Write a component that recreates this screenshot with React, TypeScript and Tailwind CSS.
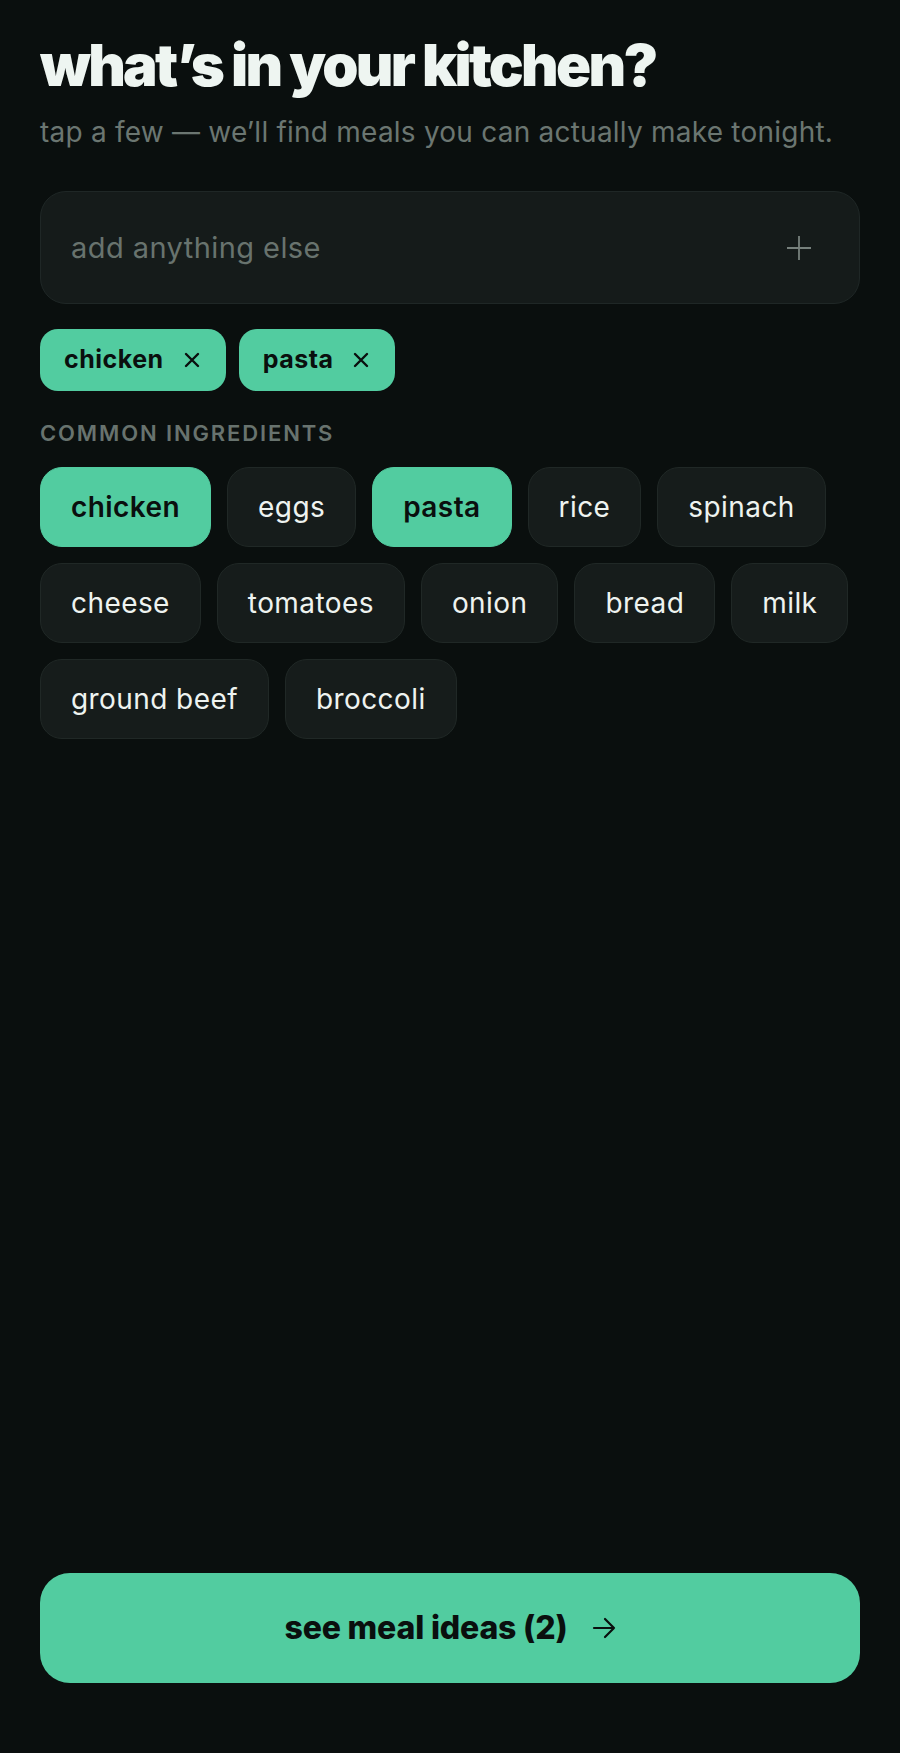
import { useState } from "react";

const COMMON = [
  "chicken",
  "eggs",
  "pasta",
  "rice",
  "spinach",
  "cheese",
  "tomatoes",
  "onion",
  "bread",
  "milk",
  "ground beef",
  "broccoli",
];

function CloseIcon() {
  return (
    <svg width="16" height="16" viewBox="0 0 16 16" fill="none" stroke="currentColor" strokeWidth="2.4" strokeLinecap="round">
      <path d="M2 2l12 12M14 2L2 14" />
    </svg>
  );
}

function PlusIcon() {
  return (
    <svg width="24" height="24" viewBox="0 0 24 24" fill="none" stroke="currentColor" strokeWidth="1.8">
      <path d="M12 0v24M0 12h24" />
    </svg>
  );
}

function ArrowIcon() {
  return (
    <svg width="24" height="22" viewBox="0 0 24 22" fill="none" stroke="currentColor" strokeWidth="2.2" strokeLinecap="round" strokeLinejoin="round">
      <path d="M2 11h20M13 2l9 9-9 9" />
    </svg>
  );
}

export default function App() {
  const [selected, setSelected] = useState<string[]>(["chicken", "pasta"]);
  const [extra, setExtra] = useState("");

  const toggle = (item: string) => {
    setSelected((s) => (s.includes(item) ? s.filter((x) => x !== item) : [...s, item]));
  };

  return (
    <div
      className="min-h-[1753px] bg-[#0a0f0e] flex flex-col px-10 pt-[36px] pb-[70px]"
      style={{ fontFamily: "Inter, 'Noto Sans', sans-serif" }}
    >
      <h1 className="text-[58px] leading-none font-black tracking-[-0.047em] text-[#eef5f1]">
        what’s in your kitchen?
      </h1>
      <p className="mt-[21px] text-[28px] leading-tight tracking-[0.008em] text-[#6b7671]">
        tap a few — we’ll find meals you can actually make tonight.
      </p>

      <div className="mt-[41px] h-[113px] flex items-center rounded-[26px] border border-[#1f2726] bg-[#151b1a] pl-[30px] pr-[48px]">
        <input
          value={extra}
          onChange={(e) => setExtra(e.target.value)}
          placeholder="add anything else"
          className="flex-1 bg-transparent text-[29px] tracking-[0.015em] text-[#eef5f1] placeholder:text-[#68736e] outline-none"
        />
        <button className="text-[#76807c]">
          <PlusIcon />
        </button>
      </div>

      <div className="mt-[25px] flex flex-wrap gap-[13px]">
        {selected.map((item) => (
          <span
            key={item}
            className="h-[62px] flex items-center gap-[20px] rounded-[18px] bg-[#52cca0] pl-[24px] pr-[26px] text-[25px] font-bold tracking-[0.02em] text-[#0a0f0e]"
          >
            {item}
            <button onClick={() => toggle(item)}>
              <CloseIcon />
            </button>
          </span>
        ))}
      </div>

      <div className="mt-[31px] text-[22px] leading-[22px] font-semibold tracking-[0.085em] text-[#68736e]">
        COMMON INGREDIENTS
      </div>

      <div className="mt-[23px] flex flex-wrap gap-4">
        {COMMON.map((item) => {
          const on = selected.includes(item);
          return (
            <button
              key={item}
              onClick={() => toggle(item)}
              className={
                on
                  ? "h-[80px] px-[30px] rounded-[22px] border border-[#52cca0] bg-[#52cca0] text-[28px] font-semibold tracking-[0.015em] text-[#0a0f0e]"
                  : "h-[80px] px-[30px] rounded-[22px] border border-[#202826] bg-[#161c1b] text-[28px] tracking-[0.015em] text-[#eef3f0]"
              }
            >
              {item}
            </button>
          );
        })}
      </div>

      <button className="mt-auto h-[110px] flex items-center justify-center gap-[24px] rounded-[30px] bg-[#52cca0] text-[32px] font-extrabold tracking-[-0.005em] text-[#0a0f0e]">
        see meal ideas ({selected.length})
        <ArrowIcon />
      </button>
    </div>
  );
}
